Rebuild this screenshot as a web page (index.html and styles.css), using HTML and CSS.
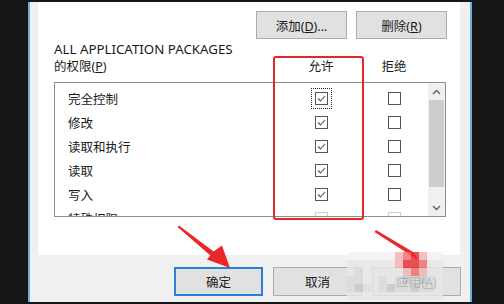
FILE: index.html
```html
<!DOCTYPE html>
<html lang="zh-CN">
<head>
    <meta charset="UTF-8">
    <title>权限</title>
    <link rel="stylesheet" href="styles.css">
</head>
<body>
    <div class="window">
        <div class="page">
            <div class="top-buttons">
                <button class="btn">添加(<u>D</u>)...</button>
                <button class="btn">删除(<u>R</u>)</button>
            </div>
            <div class="perm-head">
                <div class="perm-label"><span class="latin">ALL APPLICATION PACKAGES</span><br>的权限(<u>P</u>)</div>
                <div class="col-title">允许</div>
                <div class="col-title">拒绝</div>
            </div>
            <div class="listbox">
                <div class="rows">
                    <div class="row">
                        <span class="name">完全控制</span>
                        <span class="cell"><span class="cb checked focus"></span></span>
                        <span class="cell"><span class="cb"></span></span>
                    </div>
                    <div class="row">
                        <span class="name">修改</span>
                        <span class="cell"><span class="cb checked"></span></span>
                        <span class="cell"><span class="cb"></span></span>
                    </div>
                    <div class="row">
                        <span class="name">读取和执行</span>
                        <span class="cell"><span class="cb checked"></span></span>
                        <span class="cell"><span class="cb"></span></span>
                    </div>
                    <div class="row">
                        <span class="name">读取</span>
                        <span class="cell"><span class="cb checked"></span></span>
                        <span class="cell"><span class="cb"></span></span>
                    </div>
                    <div class="row">
                        <span class="name">写入</span>
                        <span class="cell"><span class="cb checked"></span></span>
                        <span class="cell"><span class="cb"></span></span>
                    </div>
                    <div class="row">
                        <span class="name">特殊权限</span>
                        <span class="cell"><span class="cb disabled"></span></span>
                        <span class="cell"><span class="cb disabled"></span></span>
                    </div>
                </div>
                <div class="scrollbar">
                    <div class="arrow">
                        <svg width="9" height="6" viewBox="0 0 9 6"><polyline points="1,5 4.5,1.5 8,5" fill="none" stroke="#606060" stroke-width="1.4"/></svg>
                    </div>
                    <div class="thumb"></div>
                    <div class="track"></div>
                    <div class="arrow">
                        <svg width="9" height="6" viewBox="0 0 9 6"><polyline points="1,1 4.5,4.5 8,1" fill="none" stroke="#606060" stroke-width="1.4"/></svg>
                    </div>
                </div>
            </div>
        </div>
        <div class="bottom-buttons">
            <button class="btn btn-default">确定</button>
            <button class="btn">取消</button>
            <button class="btn">应用(<u>A</u>)</button>
        </div>
    </div>

    <!-- annotations drawn over the screenshot -->
    <div class="mark-box"></div>
    <svg class="arrows" width="504" height="304" viewBox="0 0 504 304">
        <polygon fill="#e8282b" points="179,225.5 213.6,251.6 222,245.5 230,268 207,259.5 210.4,255.4 177.5,227"/>
        <polygon fill="#e8282b" points="376,230 414,252.5 418,260 374.5,232"/>
    </svg>
    <div class="mosaic">
        <i class="w"></i><i class="w"></i><i class="w"></i><i class="w"></i><i class="w"></i><i class="w"></i><i class="p"></i><i class="r2"></i><i class="r"></i><i class="p"></i><i class="w"></i><i class="w"></i>
        <i class="g1"></i><i class="g1"></i><i class="g1"></i><i class="g1"></i><i class="g1"></i><i class="g1"></i><i class="p"></i><i class="r"></i><i class="r"></i><i class="r2"></i><i class="g1"></i><i class="g1"></i>
        <i class="g1"></i><i class="g2"></i><i class="g1"></i><i class="g1"></i><i class="g1"></i><i class="g1"></i><i class="g1"></i><i class="p"></i><i class="r2"></i><i class="p"></i><i class="g1"></i><i class="g1"></i>
        <i class="g2"></i><i class="g2"></i><i class="g1"></i><i class="g1"></i><i class="g2"></i><i class="g1"></i><i class="g2"></i><i class="g3"></i><i class="g2"></i><i class="g3"></i><i class="g2"></i><i class="g1"></i>
        <i class="g2"></i><i class="g3"></i><i class="g2"></i><i class="g1"></i><i class="g2"></i><i class="g3"></i><i class="g2"></i><i class="g2"></i><i class="g3"></i><i class="g2"></i><i class="g2"></i><i class="g1"></i>
        <i class="g1"></i><i class="g1"></i><i class="g1"></i><i class="g1"></i><i class="g1"></i><i class="g1"></i><i class="g1"></i><i class="g1"></i><i class="g1"></i><i class="g1"></i><i class="g1"></i><i class="g1"></i>
    </div>
</body>
</html>
```

FILE: styles.css
```css
body {
    margin: 0;
    padding-top: 2px;
    height: 304px;
    box-sizing: border-box;
    background-color: #151515;
    font-family: "Noto Sans", "Noto Sans CJK SC", sans-serif;
    font-size: 12.5px;
    color: #1a1a1a;
    position: relative;
    overflow: hidden;
}
.window {
    margin-left: 28px;
    width: 444px;
    height: 300px;
    box-sizing: border-box;
    background-color: #f0f0f0;
    border-left: 2px solid #6aaee0;
    border-right: 2px solid #6aaee0;
}
.page {
    margin-left: 8px;
    width: 422px;
    height: 253px;
    box-sizing: border-box;
    background-color: #fff;
    padding: 9px 14px 0 16px;
}
.btn {
    font-family: inherit;
    font-size: 12.5px;
    color: #1a1a1a;
    background-color: #e1e1e1;
    border: 1px solid #adadad;
    padding: 0;
    width: 91px;
    height: 28px;
}
.top-buttons {
    display: flex;
    justify-content: flex-end;
    gap: 9px;
    margin-right: -1px;
}
.perm-head {
    display: grid;
    grid-template-columns: 214px 40px 40px;
    column-gap: 33px;
    margin-top: 2px;
    line-height: 17px;
}
.perm-label {
    white-space: nowrap;
}
.latin {
    font-size: 13.3px;
}
.col-title {
    align-self: end;
    text-align: center;
}
.listbox {
    margin-top: 7px;
    width: 392px;
    height: 135px;
    box-sizing: border-box;
    border: 1px solid #8a8d93;
    display: flex;
}
.rows {
    flex: 1;
    padding-top: 3px;
    overflow: hidden;
}
.row {
    display: grid;
    grid-template-columns: 213px 40px 40px;
    column-gap: 33px;
    height: 24px;
    align-items: center;
}
.name {
    padding-left: 13px;
}
.cell {
    display: flex;
    justify-content: center;
}
.cb {
    width: 13px;
    height: 13px;
    box-sizing: border-box;
    border: 1px solid #555;
    background-color: #fff;
}
.cb.checked {
    background-image: url("data:image/svg+xml,%3Csvg xmlns='http://www.w3.org/2000/svg' width='11' height='11'%3E%3Cpolyline points='2,5.5 4.5,8 9,3' fill='none' stroke='%23555' stroke-width='1.1'/%3E%3C/svg%3E");
}
.cb.focus {
    outline: 1px dotted #222;
    outline-offset: 3px;
}
.cb.disabled {
    border-color: #cfcfcf;
}
.scrollbar {
    width: 17px;
    background-color: #f0f0f0;
    display: flex;
    flex-direction: column;
}
.arrow {
    height: 17px;
    display: flex;
    align-items: center;
    justify-content: center;
}
.thumb {
    height: 87px;
    margin: 0 1px;
    background-color: #cdcdcd;
}
.track {
    flex: 1;
}
.bottom-buttons {
    display: flex;
    justify-content: flex-end;
    gap: 10px;
    padding: 12px 9px 0 0;
}
.bottom-buttons .btn {
    width: 89px;
    height: 29px;
}
.btn-default {
    border: 2px solid #2b7fd4;
}
.mark-box {
    position: absolute;
    left: 273px;
    top: 56px;
    width: 91px;
    height: 164px;
    box-sizing: border-box;
    border: 2.5px solid #e5262b;
    border-radius: 3px;
}
.arrows {
    position: absolute;
    left: 0;
    top: 0;
}
.mosaic {
    position: absolute;
    left: 347px;
    top: 252px;
    display: grid;
    grid-template-columns: repeat(12, 8px);
    grid-auto-rows: 8px;
    opacity: 0.8;
}
.mosaic i { display: block; }
.mosaic .w { background-color: #f4f4f4; }
.mosaic .g1 { background-color: #e8e8e8; }
.mosaic .g2 { background-color: #dcdcdc; }
.mosaic .g3 { background-color: #c9c9c9; }
.mosaic .p { background-color: #f2b4b4; }
.mosaic .r { background-color: #e8282b; }
.mosaic .r2 { background-color: #ee6a6a; }
```
